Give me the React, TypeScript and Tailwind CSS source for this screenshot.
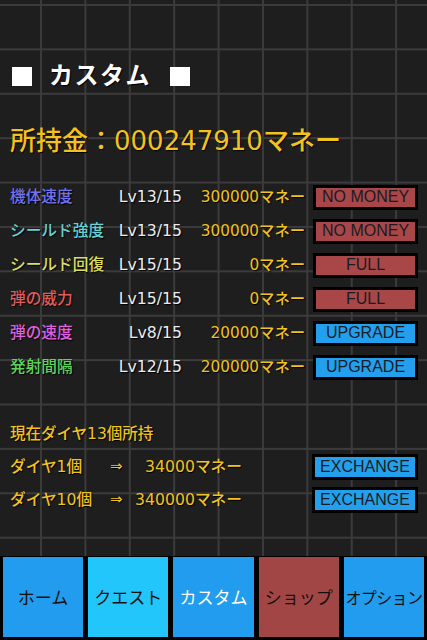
const jp = "font-['DejaVu_Sans','Noto_Sans_CJK_JP',sans-serif]"
const btnFont = "font-['Liberation_Sans',Arial,sans-serif]"

const upgrades = [
  { label: '機体速度', color: 'text-[#7272ea]', lv: 'Lv13/15', price: '300000マネー', btn: 'NO MONEY', red: true },
  { label: 'シールド強度', color: 'text-[#62d4d4]', lv: 'Lv13/15', price: '300000マネー', btn: 'NO MONEY', red: true },
  { label: 'シールド回復', color: 'text-[#dede5e]', lv: 'Lv15/15', price: '0マネー', btn: 'FULL', red: true },
  { label: '弾の威力', color: 'text-[#e05c5c]', lv: 'Lv15/15', price: '0マネー', btn: 'FULL', red: true },
  { label: '弾の速度', color: 'text-[#e060e0]', lv: 'Lv8/15', price: '20000マネー', btn: 'UPGRADE', red: false },
  { label: '発射間隔', color: 'text-[#5ad65a]', lv: 'Lv12/15', price: '200000マネー', btn: 'UPGRADE', red: false },
]

const exchanges = [
  { label: 'ダイヤ1個', price: '34000マネー' },
  { label: 'ダイヤ10個', price: '340000マネー' },
]

const tabs = [
  { label: 'ホーム', cls: 'bg-[#229cee] text-[#111] text-[17px]' },
  { label: 'クエスト', cls: 'bg-[#22c6fb] text-[#111] text-[17px]' },
  { label: 'カスタム', cls: 'bg-[#229cee] text-white text-[17px]' },
  { label: 'ショップ', cls: 'bg-[#a24545] text-[#111] text-[17px]' },
  { label: 'オプション', cls: 'bg-[#229cee] text-[#111] text-[16px] tracking-[-0.6px]' },
]

function ActionButton({ text, red }: { text: string; red: boolean }) {
  return (
    <div
      className={`ml-[8px] flex h-[25px] w-[105px] items-center justify-center border-[3px] border-black text-[16px] font-normal leading-none text-[#1a1c24] [text-shadow:none] ${btnFont} ${
        red ? 'bg-[#a84648]' : 'bg-[#22a0ee]'
      }`}
    >
      {text}
    </div>
  )
}

export default function App() {
  return (
    <div className={`flex h-[640px] w-[427px] flex-col overflow-hidden bg-[#1e1e1e] ${jp}`}>
      {/* grid board */}
      <main className="flex-1 bg-[linear-gradient(to_right,#3b3b3b_2px,transparent_2px),linear-gradient(to_bottom,#3b3b3b_2px,transparent_2px)] bg-[size:44.4px_44.4px] bg-[position:40px_4px] pt-[61px] [text-shadow:1px_1px_1px_#000]">
        <h1 className="flex items-center pl-[12px] text-[24px] font-bold leading-[30px] text-white">
          <span className="inline-block h-[19px] w-[20px] bg-white" />
          <span className="ml-[17px] tracking-[1.5px]">カスタム</span>
          <span className="ml-[19px] inline-block h-[19px] w-[20px] bg-white" />
        </h1>

        <div className="mt-[33px] pl-[10px] text-[26px] font-medium leading-[34px] text-[#f2c21e]">
          所持金：000247910マネー
        </div>

        <div className="mt-[22px] flex flex-col">
          {upgrades.map((u) => (
            <div key={u.label} className="flex h-[34px] items-center pl-[10px] text-[15.7px] font-medium">
              <span className={`w-[100px] whitespace-nowrap ${u.color}`}>{u.label}</span>
              <span className="w-[72px] text-right text-[#ececec]">{u.lv}</span>
              <span className="w-[123px] whitespace-nowrap text-right text-[15.3px] text-[#f2c21e]">{u.price}</span>
              <ActionButton text={u.btn} red={u.red} />
            </div>
          ))}
        </div>

        <div className="mt-[40px] pl-[10px] text-[15.5px] font-medium leading-[20px] text-[#f2c21e]">
          現在ダイヤ13個所持
        </div>

        <div className="mt-[6px] flex flex-col">
          {exchanges.map((e) => (
            <div key={e.label} className="flex h-[33px] items-center pl-[10px] text-[15.7px] font-medium text-[#f2c21e]">
              <span className="w-[100px] whitespace-nowrap">{e.label}</span>
              <span className="w-[12px] text-center text-[15px]">⇒</span>
              <span className="w-[120px] whitespace-nowrap text-right">{e.price}</span>
              <span className={`ml-[70px] flex h-[26px] w-[106px] items-center justify-center border-[3px] border-black bg-[#22a0ee] text-[16px] font-normal leading-none text-[#1a1c24] [text-shadow:none] ${btnFont}`}>
                EXCHANGE
              </span>
            </div>
          ))}
        </div>
      </main>

      {/* bottom navigation */}
      <nav className="flex h-[84px] gap-[5px] bg-black px-[3px] pb-[3px] pt-[1px] font-['Noto_Sans_CJK_JP',sans-serif]">
        {tabs.map((t) => (
          <div key={t.label} className={`flex flex-1 items-center justify-center whitespace-nowrap ${t.cls}`}>
            {t.label}
          </div>
        ))}
      </nav>
    </div>
  )
}
